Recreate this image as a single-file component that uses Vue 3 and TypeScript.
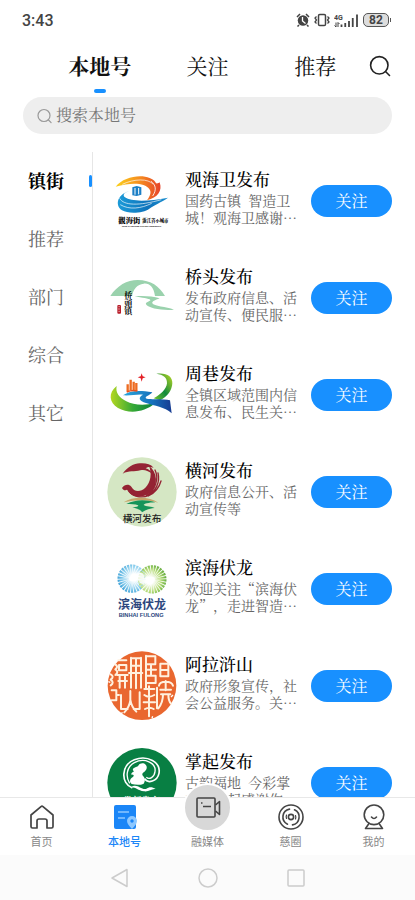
<script setup lang="ts">
import { ref } from 'vue'

interface Account {
  id: string
  name: string
  intro: string
}

const topTabs: string[] = ['本地号', '关注', '推荐']
const activeTop = ref('本地号')

const categories: string[] = ['镇街', '推荐', '部门', '综合', '其它']
const activeCategory = ref('镇街')

const keyword = ref('')

const accounts: Account[] = [
  { id: 'guanhaiwei', name: '观海卫发布', intro: '国药古镇\u00a0 智造卫城！观海卫感谢…' },
  { id: 'qiaotou', name: '桥头发布', intro: '发布政府信息、活动宣传、便民服…' },
  { id: 'zhouxiang', name: '周巷发布', intro: '全镇区域范围内信息发布、民生关…' },
  { id: 'henghe', name: '横河发布', intro: '政府信息公开、活动宣传等' },
  { id: 'binhai', name: '滨海伏龙', intro: '欢迎关注“滨海伏龙”，走进智造…' },
  { id: 'hushan', name: '阿拉浒山', intro: '政府形象宣传，社会公益服务。关…' },
  { id: 'zhangqi', name: '掌起发布', intro: '古韵福地\u00a0 今彩掌起！掌起感谢你…' },
]
</script>

<template>
  <div class="app" lang="zh-CN">
    <header class="status">
      <span class="clock">3:43</span>
      <span class="status-icons">
        <svg width="14" height="14" viewBox="0 0 28 28">
          <circle cx="14" cy="15" r="10.5" fill="#444" />
          <path d="M2 8 8 2M26 8 20 2M6 24l-3 3M22 24l3 3" stroke="#444" stroke-width="3" />
          <path d="M13 8v8l6 5" fill="none" stroke="#fff" stroke-width="2.6" />
        </svg>
        <svg width="16" height="14" viewBox="0 0 32 28">
          <rect x="9" y="3" width="14" height="22" rx="2.5" fill="none" stroke="#444" stroke-width="3" />
          <path d="M5 7 2 10l3 4-3 4 3 3M27 7l3 3-3 4 3 4-3 3" fill="none" stroke="#444" stroke-width="2.6" />
        </svg>
        <svg width="25" height="15" viewBox="0 0 50 30">
          <text x="0" y="13" class="net">4G</text>
          <path d="M4 19v9l-3-3M8 28v-9l3 3" fill="none" stroke="#444" stroke-width="2" />
          <path d="M15 28v-5M22.500 28v-8M30 28V16M37.500 28V10M46 28V3" stroke="#444" stroke-width="3.600" />
        </svg>
        <span class="battery">82</span>
      </span>
    </header>

    <nav class="top-tabs">
      <button
        v-for="tab in topTabs"
        :key="tab"
        type="button"
        class="top-tab"
        :class="{ active: tab === activeTop }"
        @click="activeTop = tab"
      >
        {{ tab }}
      </button>
      <button type="button" class="find" aria-label="搜索">
        <svg width="22" height="22" viewBox="0 0 22 22" fill="none" stroke="#222" stroke-width="1.6">
          <circle cx="10.300" cy="10.300" r="8.700" />
          <path d="m16.500 16.500 4 4" stroke-linecap="round" />
        </svg>
      </button>
    </nav>

    <label class="search">
      <svg width="16" height="16" viewBox="0 0 16 16" fill="none" stroke="#999" stroke-width="1.2">
        <circle cx="7" cy="7.500" r="6" />
        <path d="m11.500 12 2.600 2.600" stroke-linecap="round" />
      </svg>
      <input v-model="keyword" type="text" placeholder="搜索本地号" aria-label="搜索本地号" />
    </label>

    <main class="content">
      <aside class="side">
        <button
          v-for="item in categories"
          :key="item"
          type="button"
          class="category"
          :class="{ active: item === activeCategory }"
          @click="activeCategory = item"
        >
          {{ item }}
        </button>
      </aside>

      <ul class="list">
        <li v-for="a in accounts" :key="a.id" class="row">
          <svg v-if="a.id === 'guanhaiwei'" class="avatar" viewBox="20 18 210 210">
            <defs>
              <linearGradient id="gh-warm">
                <stop offset="0" stop-color="#fbd21c" />
                <stop offset=".55" stop-color="#f58a1f" />
                <stop offset="1" stop-color="#e6432a" />
              </linearGradient>
              <linearGradient id="gh-cool">
                <stop offset="0" stop-color="#1c9bd8" />
                <stop offset=".6" stop-color="#0f73bb" />
                <stop offset="1" stop-color="#1a8fd0" />
              </linearGradient>
            </defs>
            <path d="M46 80C68 52 118 42 148 54c12 5 17 10 19 16 5 1 8-1 11-3 9 26-6 46-38 54 10-14 14-25 7-34-14-20-56-20-101-7Z" fill="url(#gh-warm)" />
            <path d="M66 73c35-17 78-18 93 0" fill="none" stroke="#fff" stroke-width="2" />
            <path d="M152 64c15 11 17 26 5 44" fill="none" stroke="#fff" stroke-width="2.500" />
            <path d="M92 92c-20 4-27 12-18 20 20 14 72 12 129 1-20 14-42 22-56 33-18 14-64 16-82 5-24-17-12-52 27-59Z" fill="url(#gh-cool)" />
            <path d="M58 115c12 22 57 23 125 4M60 134c26 16 62 12 94-4" fill="none" stroke="#fff" stroke-width="2" />
            <path d="M96 106V82l13-4 14 4v22l-14 4Z" fill="#1b7fc6" />
            <path d="M104 104V84M115 103V84" fill="none" stroke="#fff" stroke-width="3" />
            <text x="54" y="189" class="brush">觀海街</text>
            <text x="126" y="187" class="brush-small">浙江省小城市</text>
            <text x="64" y="200" class="latin-tiny">Town of Zhejiang Province Guanhaiwei</text>
          </svg>

          <svg v-else-if="a.id === 'qiaotou'" class="avatar" viewBox="20 9 210 210">
            <path d="M30 108C50 77 80 60 112 60c40 0 65 19 82 48h-30C160 80 147 69 130 71c-19 2-31 16-35 37Z" fill="#9ad2ad" />
            <path d="M103 109c28-2 54 0 75 6-14 5-24 10-22 15 4 9 42 10 65 19-27 4-78-3-84-16-3-8 15-9 13-13-3-5-26-6-47-11Z" fill="#9ad2ad" />
            <text x="84" y="93" class="ink">桥頭镇</text>
            <rect x="51" y="135" width="11" height="26" rx="3" fill="#b91e2b" />
            <path d="M54 140h5M56 144v6M54 154h5" stroke="#fff" stroke-width="1.500" />
          </svg>

          <svg v-else-if="a.id === 'zhouxiang'" class="avatar" viewBox="20 15 210 210">
            <defs>
              <linearGradient id="zx-ring" x1="0" x2="1" y1="1" y2="0">
                <stop offset="0" stop-color="#79c52e" />
                <stop offset=".45" stop-color="#118a3c" />
                <stop offset="1" stop-color="#c4dc22" />
              </linearGradient>
              <linearGradient id="zx-left" x1="0" x2="1">
                <stop offset="0" stop-color="#b5d721" />
                <stop offset=".5" stop-color="#36a936" />
                <stop offset="1" stop-color="#087f3d" />
              </linearGradient>
              <linearGradient id="zx-river" x1="0" x2="1">
                <stop offset="0" stop-color="#2ba7dc" />
                <stop offset=".6" stop-color="#1571bc" />
                <stop offset="1" stop-color="#173b91" />
              </linearGradient>
            </defs>
            <path d="M49 93c-26 20-23 50 4 66 32 18 79 14 111-14-34 7-66 5-86-6-22-12-33-26-29-46Z" fill="url(#zx-left)" />
            <path d="M168 56c30-4 49 7 48 29-1 21-14 40-37 51l-19-6c22-12 38-27 40-45 1-18-11-26-32-29Z" fill="url(#zx-ring)" />
            <path d="M68 121c19-13 44-16 88-9-6 9-20 11-20 17 6 7 52 0 73 7l5 39c-22-20-51-22-77-31-21-7-25-16-9-25-18-2-38 4-60 2Z" fill="url(#zx-river)" />
            <path d="M82 108V88M91 106V74M100 106V80M108 107V84" stroke="#ed6b20" stroke-width="7" />
            <path d="M79 111c11-5 21-6 32-3" fill="none" stroke="#e9511d" stroke-width="5" />
            <path d="m124 55 3 9 9 3-9 3-3 10-3-10-9-3 9-3Z" fill="#e31f26" />
          </svg>

          <svg v-else-if="a.id === 'henghe'" class="avatar" viewBox="20 20 210 210">
            <circle cx="125" cy="125" r="104" fill="#d5e7c4" />
            <path d="M67 70c14-19 34-31 51-31 18-1 32 1 42 13-12-3-18-2-24 2 9 2 16 8 18 15-12-8-22-12-34-9-17 5-35 0-53 10Z" fill="#942333" />
            <path d="M146 46c26 19 28 60 5 80-16 14-38 17-56 8-7-4-11-10-13-17-6 5-13 4-17-4 8-11 20-13 28-4 8 16 27 17 42 3 17-17 20-43 11-66Z" fill="#942333" />
            <path d="M164 59c13 26 1 61-26 77M173 68c7 29-7 55-32 69M182 92c-6 22-19 36-38 45M82 117c12 22 40 28 64 18" fill="none" stroke="#942333" stroke-width="4" stroke-linecap="round" />
            <path d="M70 156c30-19 77-17 104 1-38-10-67-9-104-1Z" fill="#c5a66b" />
            <path d="M78 161c27-13 56-14 87-5-22 1-33 4-35 8 6 5 25 4 33 9-15 1-25 5-38 13-3-9-18-11-29-15 14-1 20-3 17-6-8-4-21-4-35-4Z" fill="#16945a" />
            <text x="67" y="214" class="seal-name">横河发布</text>
          </svg>

          <svg v-else-if="a.id === 'binhai'" class="avatar" viewBox="20 12 210 210">
            <defs>
              <radialGradient id="bh-blue" gradientUnits="userSpaceOnUse" cx="102" cy="82" r="52">
                <stop offset=".2" stop-color="#fff" />
                <stop offset=".65" stop-color="#8fd0ee" />
                <stop offset="1" stop-color="#3a9fd6" />
              </radialGradient>
              <radialGradient id="bh-green" gradientUnits="userSpaceOnUse" cx="148" cy="92" r="52">
                <stop offset=".2" stop-color="#fff" />
                <stop offset=".65" stop-color="#b5db77" />
                <stop offset="1" stop-color="#5da83a" />
              </radialGradient>
            </defs>
            <circle cx="94" cy="86" r="25" pathLength="260" fill="none" stroke="url(#bh-blue)" stroke-width="35" stroke-dasharray="7 3" />
            <circle cx="156" cy="88" r="25" pathLength="260" fill="none" stroke="url(#bh-green)" stroke-width="35" stroke-dasharray="7 3" />
            <path d="M111 70c14-7 22 2 20 16 7-8 16-8 21-1-8 15-22 20-31 15-9-7-13-17-10-30Z" fill="#fff" opacity=".8" />
            <text x="53" y="178" class="fulong">滨海伏龙</text>
            <text x="55" y="201" class="fulong-latin">BINHAI FULONG</text>
          </svg>

          <svg v-else-if="a.id === 'hushan'" class="avatar" viewBox="20 18 210 210">
            <circle cx="125" cy="122" r="103" fill="#e9672f" />
            <g fill="none" stroke="#fff1df" stroke-width="6" stroke-linecap="round" stroke-linejoin="round">
              <path d="M45 58c7 5 7 10 0 15 8 5 8 11 0 17M31 88c8 4 8 10 0 16 8 5 8 11 0 17" />
              <path d="M54 46h24M56 60h22v16H56ZM50 90h32M58 90v38M74 90v38M54 108h26" />
              <path d="M92 38v90M122 38v90M92 40h30M92 62h30M86 84h40M107 40v90" />
              <path d="M137 32v96M137 34h28v24h-28M137 74h30M152 58v32M140 92h26v22h-26" />
              <path d="M180 56h24v38h-24ZM180 75h24" />
              <path d="M34 136h14v30h-14M48 150h8" />
              <path d="M62 150v42h20M118 142v50h-18M90 138v28c-2 14-8 26-18 36M90 164c2 14 8 26 18 36" />
              <path d="M132 132h30M146 124v90M132 150c8 6 20 6 30 0M130 172h34M134 192c8-5 18-5 26 0" />
              <path d="M176 122c2-16 38-16 42 0M180 134h32M196 108v28M182 148h28M188 148c0 18-4 30-14 42M204 148c0 14 2 22 8 28M170 128v62" />
            </g>
            <path d="m24 110 6 2M218 150l-6 6M59 207l8-4M205 45l4-5M155 220l2-6" stroke="#fff" stroke-width="4" />
          </svg>

          <svg v-else class="avatar" viewBox="20 24 210 210">
            <circle cx="125" cy="128" r="104" fill="#087f43" />
            <path d="M96 144c-36-13-34-70 6-85 40-15 80 8 74 41-5 24-34 32-43 16" fill="none" stroke="#fff" stroke-width="5" />
            <path d="M88 130c-14-22-8-50 14-62 30-16 66 0 62 27-2 17-17 25-26 17" fill="none" stroke="#fff" stroke-width="4" />
            <path d="M98 86c5-5 13-4 17-10 4-7 15-8 21-2 7 8 2 17-5 22-6 4-7 8-2 13 6 6 6 15 1 22-10 5-24 4-36 1-9-8-4-17 4-21 4-3 3-8-6-7 2-6 5-7 9-10-3-2-4-5-3-8Z" fill="#fff" />
            <path d="M92 142c18-14 29 8 45 5 10-7 18-7 29 0-13-2-19 9-35 7-19-2-23-12-39-12Z" fill="#fff" />
            <text x="68" y="191" class="zhangqi">掌起发布</text>
          </svg>

          <div class="info">
            <h2>{{ a.name }}</h2>
            <p>{{ a.intro }}</p>
          </div>
          <button type="button" class="follow">关注</button>
        </li>
      </ul>
    </main>

    <nav class="tabbar">
      <a href="#home" class="tab">
        <svg width="26" height="26" viewBox="0 0 26 26" fill="none" stroke="#444" stroke-width="1.7" stroke-linejoin="round">
          <path d="M2 11 12 2.600q1-.8 2 0L24 11v11.500q0 1.500-1.500 1.500H18v-7q0-2-2-2h-6q-2 0-2 2v7H3.500Q2 24 2 22.500Z" />
        </svg>
        <span>首页</span>
      </a>
      <a href="#local" class="tab current">
        <svg width="26" height="26" viewBox="0 0 26 26">
          <rect x="2" y="1" width="22" height="24" rx="2" fill="#1b86f7" />
          <path d="M6 8h11M6 14h7" stroke="#8ec8ff" stroke-width="1.500" />
          <path d="M20 12a5 5 0 0 1 5 5c0 3-2.500 5-5 8-2.500-3-5-5-5-8a5 5 0 0 1 5-5Z" fill="#8ec8ff" />
          <circle cx="20" cy="17" r="1.700" fill="#1b86f7" />
        </svg>
        <span>本地号</span>
      </a>
      <a href="#media" class="tab media">
        <span class="bubble">
          <svg width="26" height="24" viewBox="0 0 26 24" fill="none" stroke="#444" stroke-width="1.600" stroke-linejoin="round">
            <rect x="2" y="2" width="18" height="19" rx="1" />
            <path d="m20.500 9 4-3.500v13l-4-3.500M8 10.500h8M6 7h1.500" />
          </svg>
        </span>
        <span>融媒体</span>
      </a>
      <a href="#circle" class="tab">
        <svg width="26" height="26" viewBox="0 0 26 26" fill="none" stroke="#444" stroke-width="1.600" stroke-linecap="round">
          <circle cx="13" cy="13" r="12" />
          <circle cx="13" cy="13" r="2.600" />
          <path d="M9.500 20.200a8 8 0 0 1 2-15.100M16.500 5.800a8 8 0 0 1-2 15.100" />
          <path d="M8.500 14.500a4.800 4.800 0 0 1 0-3.500M17.500 11.500a4.800 4.800 0 0 1 0 3.500" stroke-width="1.200" />
        </svg>
        <span>慈圈</span>
      </a>
      <a href="#mine" class="tab">
        <svg width="26" height="26" viewBox="0 0 26 26" fill="none" stroke="#444" stroke-width="1.600" stroke-linecap="round" stroke-linejoin="round">
          <circle cx="13" cy="10.800" r="9.800" />
          <path d="M10.500 13q2.500 3 5 0M8 19.500l-3.500 5h17l-3.500-5" />
        </svg>
        <span>我的</span>
      </a>
    </nav>

    <footer class="system">
      <button type="button" aria-label="返回">
        <svg width="20" height="20" viewBox="0 0 20 20"><path d="M17 1.500v17L2 10Z" /></svg>
      </button>
      <button type="button" aria-label="主页">
        <svg width="20" height="20" viewBox="0 0 20 20"><circle cx="10" cy="10" r="9" /></svg>
      </button>
      <button type="button" aria-label="最近任务">
        <svg width="20" height="20" viewBox="0 0 20 20"><rect x="2" y="2" width="16" height="16" rx="1" /></svg>
      </button>
    </footer>
  </div>
</template>

<style>
body {
  background: #fff;
}
</style>

<style scoped>
.app {
  display: flex;
  flex-direction: column;
  height: 100vh;
  overflow: hidden;
  background: #fff;
  color: #111;
  font-family: "Noto Serif CJK SC", "Noto Serif SC", "Noto Sans CJK SC", serif;
  text-spacing-trim: space-all;
}

button {
  padding: 0;
  border: 0;
  background: none;
  color: inherit;
  font: inherit;
  cursor: pointer;
}

svg {
  display: block;
  flex: none;
}

.status {
  display: flex;
  flex: none;
  align-items: center;
  justify-content: space-between;
  height: 40px;
  padding: 0 26px 0 22px;
  color: #444;
  font-family: Roboto, "Noto Sans", sans-serif;
}

.clock {
  font-size: 16px;
  font-weight: 500;
}

.status-icons {
  display: flex;
  align-items: center;
  gap: 4px;
}

.net {
  fill: #444;
  font: 700 14px Roboto, sans-serif;
}

.battery {
  position: relative;
  width: 24px;
  border: 1px solid #555;
  border-radius: 5px;
  background: #ddd;
  font-size: 12px;
  font-weight: 700;
  line-height: 12px;
  text-align: center;
}

.battery::after {
  position: absolute;
  top: 4px;
  right: -3px;
  width: 1px;
  height: 4px;
  background: #555;
  content: "";
}

.top-tabs {
  display: flex;
  flex: none;
  align-items: center;
  height: 53px;
  padding: 0 24px 0 46px;
}

.top-tab {
  position: relative;
  flex: 1;
  height: 53px;
  padding-bottom: 2px;
  font-size: 21px;
  line-height: 51px;
}

.top-tab.active {
  font-weight: 700;
}

.top-tab.active::after {
  position: absolute;
  bottom: 0;
  left: 50%;
  width: 12px;
  height: 4px;
  margin-left: -6px;
  border-radius: 2px;
  background: #1890ff;
  content: "";
}

.find {
  padding-bottom: 2px;
}

.search {
  display: flex;
  flex: none;
  align-items: center;
  gap: 3px;
  height: 37px;
  margin: 4px 23px 0;
  padding: 0 14px;
  border-radius: 19px;
  background: #eee;
}

.search input {
  flex: 1;
  min-width: 0;
  padding: 0 0 2px;
  border: 0;
  outline: 0;
  background: none;
  color: #333;
  font: inherit;
  font-size: 16px;
}

.search input::placeholder {
  color: #777;
  opacity: 1;
}

.content {
  display: flex;
  flex: 1;
  min-height: 0;
  margin-top: 18px;
}

.side {
  display: flex;
  flex: none;
  flex-direction: column;
  width: 92px;
  border-right: 1px solid #e6e6e6;
}

.category {
  position: relative;
  height: 58px;
  padding-bottom: 3px;
  color: #666;
  font-size: 18px;
}

.category.active {
  color: #000;
  font-weight: 700;
}

.category.active::after {
  position: absolute;
  top: 23px;
  right: 0;
  width: 3px;
  height: 12px;
  border-radius: 2px;
  background: #1890ff;
  content: "";
}

.list {
  flex: 1;
  min-width: 0;
  margin: 0;
  padding: 0 23px 0 14px;
  overflow-y: auto;
  list-style: none;
  scrollbar-width: none;
}

.row {
  display: flex;
  align-items: center;
  height: 97px;
}

.avatar {
  width: 70px;
  height: 70px;
}

.info {
  flex: 1;
  min-width: 0;
  height: 64px;
  margin: 0 14px 0 8px;
}

.info h2 {
  margin: 0 0 3px;
  color: #000;
  font-size: 17px;
  font-weight: 500;
  line-height: 20px;
}

.info p {
  margin: 0;
  color: #666;
  font-size: 14px;
  line-height: 17px;
}

.follow {
  flex: none;
  width: 81px;
  height: 32px;
  border-radius: 16px;
  background: #1890ff;
  color: #fff;
  font-size: 16px;
  line-height: 32px;
}

.brush {
  font-size: 22px;
  font-weight: 900;
}

.brush-small {
  font-size: 13px;
  font-weight: 900;
}

.latin-tiny {
  font: 700 7px "Liberation Serif", serif;
}

.ink {
  font-size: 24px;
  font-weight: 700;
  writing-mode: vertical-rl;
}

.seal-name {
  fill: #222;
  font: 500 29px "Noto Sans CJK SC", sans-serif;
}

.fulong {
  fill: #2d477e;
  font: 700 36px "Noto Sans CJK SC", sans-serif;
}

.fulong-latin {
  fill: #2d477e;
  font: 700 17px "Liberation Sans", sans-serif;
}

.zhangqi {
  fill: #fff;
  font-size: 28px;
  font-weight: 700;
}

.tabbar {
  z-index: 1;
  display: flex;
  flex: none;
  height: 57px;
  border-top: 1px solid #e8e8e8;
  background: #fff;
}

.tab {
  display: flex;
  flex: 1;
  flex-direction: column;
  align-items: center;
  gap: 3px;
  padding-top: 6px;
  color: #888;
  font-family: "Noto Sans CJK SC", sans-serif;
  font-size: 11px;
  line-height: 16px;
  text-decoration: none;
}

.tab.current {
  color: #1b86f7;
  font-weight: 500;
}

.bubble {
  display: flex;
  align-items: center;
  justify-content: center;
  width: 45px;
  height: 45px;
  margin-top: -21px;
  border: 2px solid #fff;
  border-radius: 50%;
  background: #d8d8d8;
}

.tab.media {
  gap: 1px;
}

.system {
  display: flex;
  flex: none;
  align-items: center;
  justify-content: center;
  gap: 68px;
  height: 45px;
  background: #fbfbfb;
}

.system svg {
  fill: none;
  stroke: #ccc;
  stroke-width: 1.5;
  stroke-linejoin: round;
}
</style>
